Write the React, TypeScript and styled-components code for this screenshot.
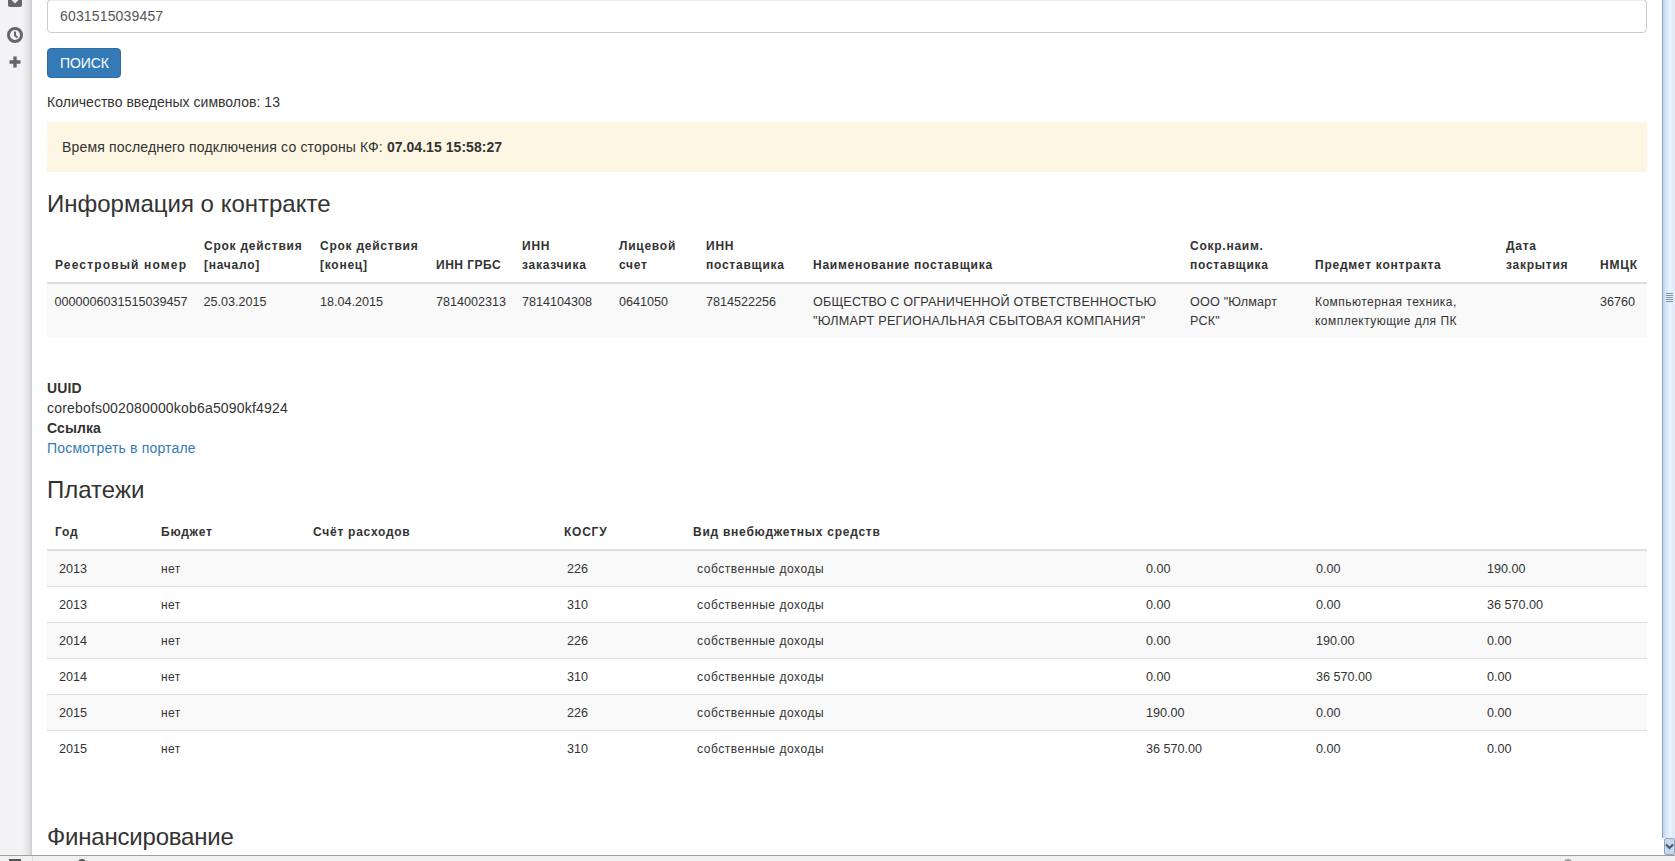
import React from "react";
import styled, { createGlobalStyle } from "styled-components";

const Global = createGlobalStyle`
  html, body { margin: 0; padding: 0; background: #fff; overflow: hidden; }
  * { box-sizing: border-box; }
  body { font-family: "Liberation Sans", Arial, sans-serif; font-size: 14px; color: #333; }
`;

const Page = styled.div`
  width: 1675px;
  height: 861px;
  display: flex;
  flex-direction: column;
  overflow: hidden;
`;
const Frame = styled.div`
  flex: 0 0 855px;
  display: flex;
  overflow: hidden;
`;
const Sidebar = styled.nav`
  flex: 0 0 32px;
  display: flex;
  flex-direction: column;
  align-items: center;
  padding-right: 2px;
  background: linear-gradient(90deg, #f3f3f5 0, #f3f3f5 22px, #e6e6e8 28px, #d6d6d8 31px, #c8c8c8 32px);
`;
const TopIcon = styled.svg`
  width: 14px;
  height: 14px;
  margin-top: -7px;
  flex: none;
`;
const ClockIcon = styled.svg`
  width: 16px;
  height: 16px;
  margin-top: 20px;
  flex: none;
`;
const PlusIcon = styled.svg`
  width: 12px;
  height: 12px;
  margin-top: 13px;
  flex: none;
`;
const Main = styled.main`
  flex: 1;
  min-width: 0;
  padding: 0 15px;
  margin-top: -1px;
  display: flex;
  flex-direction: column;
`;
const SearchInput = styled.input`
  width: 100%;
  height: 34px;
  flex: none;
  padding: 6px 12px;
  border: 1px solid #ccc;
  border-radius: 4px;
  font: 14px "Liberation Sans", Arial, sans-serif;
  letter-spacing: 0.16px;
  color: #555;
  box-shadow: inset 0 1px 1px rgba(0, 0, 0, 0.075);
  outline: none;
`;
const SearchButton = styled.button`
  align-self: flex-start;
  height: 30px;
  margin-top: 15px;
  padding: 0 12px;
  width: 74px;
  border: 1px solid #2e6da4;
  border-radius: 4px;
  background: #337ab7;
  color: #fff;
  font: 14px "Liberation Sans", Arial, sans-serif;
  letter-spacing: -0.1px;
`;
const Counter = styled.div`
  margin-top: 14px;
  line-height: 20px;
  letter-spacing: 0.03px;
`;
const Alert = styled.div`
  margin-top: 10px;
  padding: 15px;
  line-height: 20px;
  background: #fcf6e3;
  letter-spacing: 0.17px;
`;
const AlertValue = styled.b`
  letter-spacing: 0.05px;
`;
const Heading = styled.h3<{ $top: number; $spacing?: number }>`
  margin: ${(p) => p.$top}px 0 0;
  font-size: 24px;
  font-weight: 400;
  line-height: 26px;
  letter-spacing: ${(p) => p.$spacing ?? 0}px;
  color: #333;
  flex: none;
`;
const DataTable = styled.table<{ $top: number }>`
  width: 100%;
  flex: none;
  margin-top: ${(p) => p.$top}px;
  border-collapse: separate;
  border-spacing: 0;
  table-layout: fixed;
`;
const HeadCell = styled.th<{ $spacing?: number }>`
  padding: 8px 8px 7px;
  text-align: left;
  vertical-align: bottom;
  font-size: 12px;
  font-weight: 700;
  line-height: 19px;
  letter-spacing: ${(p) => p.$spacing ?? 0.75}px;
  white-space: nowrap;
  border-bottom: 2px solid #ddd;
`;
const Row = styled.tr<{ $striped: boolean }>`
  background: ${(p) => (p.$striped ? "#f9f9f9" : "#fff")};
`;
const Cell = styled.td<{ $size?: number; $left?: number; $ruled?: boolean; $spacing?: number }>`
  padding: 9px 8px 7px ${(p) => p.$left ?? 8}px;
  vertical-align: top;
  font-size: ${(p) => p.$size ?? 12.6}px;
  line-height: 19px;
  letter-spacing: ${(p) => p.$spacing ?? 0}px;
  white-space: nowrap;
  border-bottom: ${(p) => (p.$ruled ? "1px solid #ddd" : "0")};
`;
const CellLine = styled.span<{ $spacing: number }>`
  letter-spacing: ${(p) => p.$spacing}px;
`;
const PaymentCell = styled(Cell)`
  height: 36px;
`;
const InfoList = styled.dl`
  margin: 40px 0 0;
  line-height: 20px;
  flex: none;
`;
const InfoTerm = styled.dt`
  font-weight: 700;
  letter-spacing: 0.1px;
`;
const InfoValue = styled.dd`
  margin: 0;
  letter-spacing: 0.18px;
`;
const PortalLink = styled.a`
  color: #337ab7;
  text-decoration: none;
`;
const Scrollbar = styled.div`
  flex: 0 0 13px;
  display: flex;
  flex-direction: column;
  overflow: hidden;
`;
const Thumb = styled.div`
  flex: 1;
  margin-top: -244px;
  display: flex;
  align-items: center;
  justify-content: center;
  border-left: 1px solid #8fa3bd;
  background: linear-gradient(90deg, #bcd2ee 0, #d6e5f9 3px, #eaf2fd 7px, #dce9fa 13px);
`;
const Grip = styled.div`
  width: 7px;
  height: 9px;
  background: repeating-linear-gradient(180deg, #7f93ad 0, #7f93ad 1px, #e6effb 1px, #e6effb 2px);
`;
const ArrowButton = styled.div`
  flex: 0 0 17px;
  margin-left: 2px;
  display: flex;
  align-items: center;
  justify-content: center;
  border: 1px solid #8fa3bd;
  border-radius: 2px;
  background: #c5d8f0;
`;
const ArrowIcon = styled.svg`
  width: 9px;
  height: 7px;
`;
const StatusBar = styled.footer`
  flex: 0 0 6px;
  display: flex;
  border-top: 1px solid #a0a0a0;
  background: #f0f0f0;
  overflow: hidden;
`;
const StatusCorner = styled.div`
  flex: 0 0 33px;
  padding: 3px 0 0 9px;
  border-right: 1px solid #dcdcdc;
`;
const WindowGlyph = styled.div`
  width: 12px;
  height: 8px;
  border: 2px solid #555;
`;
const ArcGlyph = styled.div<{ $tone: string; $left: number }>`
  width: 8px;
  height: 8px;
  margin: 3px 0 0 ${(p) => p.$left}px;
  border-radius: 50%;
  border: 2px solid ${(p) => p.$tone};
  flex: none;
`;

const contractWidths = [149, 116, 116, 86, 97, 87, 107, 377, 125, 191, 94, 55];
const paymentWidths = [106, 152, 251, 129, 453, 170, 171, 168];

const contractHeads: { label: React.ReactNode; spacing?: number }[] = [
  { label: "Реестровый номер", spacing: 1.15 },
  { label: <>Срок действия<br />[начало]</> },
  { label: <>Срок действия<br />[конец]</> },
  { label: "ИНН ГРБС", spacing: 0.5 },
  { label: <>ИНН<br />заказчика</> },
  { label: <>Лицевой<br />счет</> },
  { label: <>ИНН<br />поставщика</> },
  { label: "Наименование поставщика" },
  { label: <>Сокр.наим.<br />поставщика</> },
  { label: "Предмет контракта" },
  { label: <>Дата<br />закрытия</> },
  { label: "НМЦК" },
];

const payments = [
  ["2013", "226", "0.00", "0.00", "190.00"],
  ["2013", "310", "0.00", "0.00", "36 570.00"],
  ["2014", "226", "0.00", "190.00", "0.00"],
  ["2014", "310", "0.00", "36 570.00", "0.00"],
  ["2015", "226", "190.00", "0.00", "0.00"],
  ["2015", "310", "36 570.00", "0.00", "0.00"],
];

export default function App() {
  return (
    <Page>
      <Global />
      <Frame>
        <Sidebar>
          <TopIcon viewBox="0 0 14 14">
            <rect x="0" y="0" width="14" height="14" rx="2" fill="#666" />
            <path d="M3 5l4 4 4-4" fill="none" stroke="#f3f3f5" strokeWidth="2" />
          </TopIcon>
          <ClockIcon viewBox="0 0 16 16">
            <circle cx="8" cy="8" r="6.5" fill="#f3f3f5" stroke="#666" strokeWidth="3" />
            <path d="M8 4.5V8.5l2.5 2" fill="none" stroke="#666" strokeWidth="2" />
          </ClockIcon>
          <PlusIcon viewBox="0 0 12 12">
            <path d="M6 0.5v11M0.5 6h11" stroke="#666" strokeWidth="3.4" />
          </PlusIcon>
        </Sidebar>
        <Main>
          <SearchInput readOnly value="6031515039457" />
          <SearchButton>ПОИСК</SearchButton>
          <Counter>Количество введеных символов: 13</Counter>
          <Alert>
            Время последнего подключения со стороны КФ: <AlertValue>07.04.15 15:58:27</AlertValue>
          </Alert>
          <Heading $top={19}>Информация о контракте</Heading>
          <DataTable $top={12}>
            <colgroup>
              {contractWidths.map((w, i) => (
                <col key={i} width={w} />
              ))}
            </colgroup>
            <thead>
              <tr>
                {contractHeads.map((h, i) => (
                  <HeadCell key={i} $spacing={h.spacing}>{h.label}</HeadCell>
                ))}
              </tr>
            </thead>
            <tbody>
              <Row $striped>
                <Cell $left={7.5}>0000006031515039457</Cell>
                <Cell $left={7.5}>25.03.2015</Cell>
                <Cell>18.04.2015</Cell>
                <Cell>7814002313</Cell>
                <Cell>7814104308</Cell>
                <Cell>0641050</Cell>
                <Cell>7814522256</Cell>
                <Cell>
                  <CellLine $spacing={0.16}>ОБЩЕСТВО С ОГРАНИЧЕННОЙ ОТВЕТСТВЕННОСТЬЮ</CellLine>
                  <br />
                  <CellLine $spacing={0.3}>"ЮЛМАРТ РЕГИОНАЛЬНАЯ СБЫТОВАЯ КОМПАНИЯ"</CellLine>
                </Cell>
                <Cell $spacing={0.2}>
                  ООО "Юлмарт
                  <br />
                  РСК"
                </Cell>
                <Cell $size={12} $spacing={0.47}>
                  Компьютерная техника,
                  <br />
                  комплектующие для ПК
                </Cell>
                <Cell />
                <Cell>36760</Cell>
              </Row>
            </tbody>
          </DataTable>
          <InfoList>
            <InfoTerm>UUID</InfoTerm>
            <InfoValue>corebofs002080000kob6a5090kf4924</InfoValue>
            <InfoTerm>Ссылка</InfoTerm>
            <InfoValue>
              <PortalLink href="#">Посмотреть в портале</PortalLink>
            </InfoValue>
          </InfoList>
          <Heading $top={19}>Платежи</Heading>
          <DataTable $top={12}>
            <colgroup>
              {paymentWidths.map((w, i) => (
                <col key={i} width={w} />
              ))}
            </colgroup>
            <thead>
              <tr>
                <HeadCell>Год</HeadCell>
                <HeadCell>Бюджет</HeadCell>
                <HeadCell>Счёт расходов</HeadCell>
                <HeadCell>КОСГУ</HeadCell>
                <HeadCell>Вид внебюджетных средств</HeadCell>
                <HeadCell />
                <HeadCell />
                <HeadCell />
              </tr>
            </thead>
            <tbody>
              {payments.map((p, i) => {
                const ruled = i < payments.length - 1;
                return (
                  <Row key={i} $striped={i % 2 === 0}>
                    <PaymentCell $left={12} $ruled={ruled}>{p[0]}</PaymentCell>
                    <PaymentCell $size={12} $spacing={0.4} $ruled={ruled}>нет</PaymentCell>
                    <PaymentCell $ruled={ruled} />
                    <PaymentCell $left={11} $ruled={ruled}>{p[1]}</PaymentCell>
                    <PaymentCell $size={12} $left={12} $spacing={0.55} $ruled={ruled}>собственные доходы</PaymentCell>
                    <PaymentCell $ruled={ruled}>{p[2]}</PaymentCell>
                    <PaymentCell $ruled={ruled}>{p[3]}</PaymentCell>
                    <PaymentCell $ruled={ruled}>{p[4]}</PaymentCell>
                  </Row>
                );
              })}
            </tbody>
          </DataTable>
          <Heading $top={57} $spacing={-0.2}>Финансирование</Heading>
        </Main>
        <Scrollbar>
          <Thumb>
            <Grip />
          </Thumb>
          <ArrowButton>
            <ArrowIcon viewBox="0 0 9 7">
              <path d="M1 1.5l3.5 3.5L8 1.5" fill="none" stroke="#4a5563" strokeWidth="2" />
            </ArrowIcon>
          </ArrowButton>
        </Scrollbar>
      </Frame>
      <StatusBar>
        <StatusCorner>
          <WindowGlyph />
        </StatusCorner>
        <ArcGlyph $tone="#555" $left={45} />
        <ArcGlyph $tone="#999" $left={1478} />
      </StatusBar>
    </Page>
  );
}
